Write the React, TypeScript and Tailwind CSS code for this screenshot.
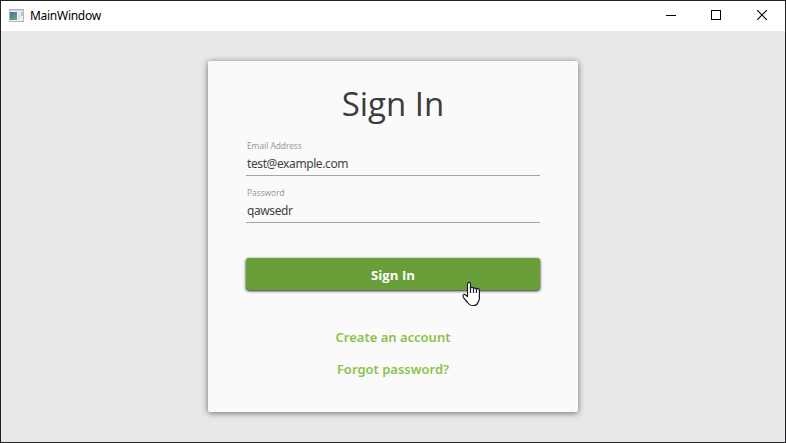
function AppIcon() {
  return (
    <svg className="-mt-[2px]" width="16" height="13" viewBox="0 0 16 13" shapeRendering="crispEdges">
      <defs>
        <linearGradient id="pane" x1="0" y1="0" x2="1" y2="1">
          <stop offset="0" stopColor="#4a7196" />
          <stop offset="1" stopColor="#5fae82" />
        </linearGradient>
      </defs>
      <rect x="1" y="0" width="15" height="13" fill="#b3b8bd" />
      <rect x="2" y="1" width="13" height="11" fill="#eef0f1" />
      <rect x="2" y="1" width="13" height="1" fill="#ced2d6" />
      <rect x="2" y="3" width="7" height="8" fill="url(#pane)" />
      <rect x="10" y="3" width="2" height="8" fill="#dfe3e6" />
      <rect x="13" y="3" width="2" height="4" fill="#a9ccb8" />
    </svg>
  );
}

function HandCursor() {
  return (
    <svg
      className="pointer-events-none absolute left-[215px] top-[23px]"
      width="20"
      height="26"
      viewBox="0 0 20 26"
    >
      <path
        d="M6.5 15.5V3C6.5 .9 9.5 .9 9.5 3V7.2C9.8 6 12.5 6.1 12.5 7.6C13 6.6 15.4 6.9 15.4 8.4C16 7.2 18.4 7.5 18.4 9.2V17.5C18.4 19.5 17.2 20.7 16.8 22C16 24 14.5 24.5 12.5 24.5H10.8C9 24.5 8 23.5 7 22C5.5 19.5 3.8 18.8 2.4 16.3C1 13.7 3.1 12.6 4.7 14Z"
        fill="#fff"
        stroke="#1b1b28"
        strokeWidth="1.2"
        strokeLinejoin="round"
      />
      <path d="M9.5 7V12M12.5 7.6V12M15.4 8.4V12" stroke="#1b1b28" strokeWidth="1.2" fill="none" />
    </svg>
  );
}

function TitleBar() {
  return (
    <header className="flex h-[30px] shrink-0 items-center bg-white pl-[7px]">
      <AppIcon />
      <span className="ml-[6px] text-[12px] leading-4 tracking-[-0.28px] text-black">MainWindow</span>
      <div className="ml-auto flex">
        <button className="flex h-[30px] w-[45px] items-center justify-center pb-[2px]" aria-label="Minimize">
          <svg width="10" height="10" shapeRendering="crispEdges"><path d="M0 5.5H10" stroke="#000" /></svg>
        </button>
        <button className="flex h-[30px] w-[46px] items-center justify-center pb-[2px]" aria-label="Maximize">
          <svg width="10" height="10" shapeRendering="crispEdges"><rect x=".5" y=".5" width="9" height="9" fill="none" stroke="#000" /></svg>
        </button>
        <button className="flex h-[30px] w-[46px] items-center justify-center pb-[2px]" aria-label="Close">
          <svg width="10" height="10"><path d="M0 0L10 10M10 0L0 10" stroke="#000" strokeWidth="1.1" /></svg>
        </button>
      </div>
    </header>
  );
}

function Field({ label, value }: { label: string; value: string }) {
  return (
    <label className="flex h-[47px] flex-col border-b border-[#a5a5a6] pl-px">
      <span className="mt-[11px] text-[8.4px] leading-3 tracking-[-0.05px] text-[#9c9c9e]">{label}</span>
      <span className="mt-[4px] text-[12px] leading-4 tracking-[-0.4px] text-[#424244]">{value}</span>
    </label>
  );
}

export default function App() {
  return (
    <div className="flex h-[443px] w-[786px] flex-col overflow-hidden border border-[#232126] bg-[#e8e8e8] font-['Noto_Sans','Open_Sans',sans-serif]">
      <TitleBar />
      <main className="flex flex-1 justify-center pt-[30px]">
        <section className="flex h-[351px] w-[370px] flex-col rounded-[2px] bg-[#fafafa] px-[38px] shadow-[0_1px_6px_rgba(0,0,0,0.55)]">
          <h1 className="mb-px mt-[19px] text-center font-['Open_Sans',sans-serif] text-[33px] font-normal leading-[48px] text-[#3c3c3e]">Sign In</h1>
          <Field label="Email Address" value="test@example.com" />
          <Field label="Password" value="qawsedr" />
          <div className="relative mt-[35px] h-[33px]">
            <button className="block h-[32px] w-full rounded-[3px] bg-[#689f38] pt-px font-['Open_Sans',sans-serif] text-[13.2px] font-bold leading-[18px] text-white shadow-[0_1px_3px_rgba(0,0,0,0.9)]">
              Sign In
            </button>
            <HandCursor />
          </div>
          <a className="mt-[37px] text-center text-[13px] font-semibold leading-[18px] text-[#8bc34a]">Create an account</a>
          <a className="mt-[14px] text-center text-[13px] font-semibold leading-[18px] text-[#8bc34a]">Forgot password?</a>
        </section>
      </main>
    </div>
  );
}
